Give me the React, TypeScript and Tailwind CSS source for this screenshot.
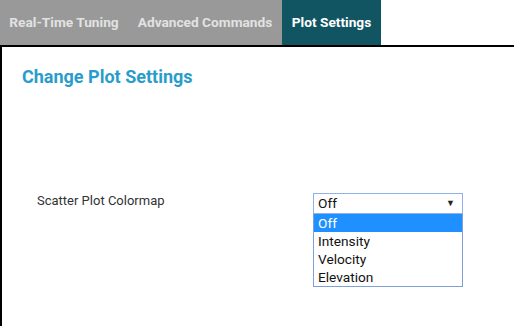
import React from "react";

export default function App() {
  const tabs = [
    { label: "Real-Time Tuning", active: false, w: "w-[128px]" },
    { label: "Advanced Commands", active: false, w: "w-[154px]" },
    { label: "Plot Settings", active: true, w: "w-[99px]" },
  ];
  const options = ["Off", "Intensity", "Velocity", "Elevation"];
  return (
    <div
      className="w-[514px] h-[326px] bg-white overflow-hidden"
      style={{ fontFamily: "Roboto, 'Liberation Sans', sans-serif" }}
    >
      <div className="flex h-[45px]">
        {tabs.map((t) => (
          <div
            key={t.label}
            className={`${t.w} h-full flex items-center justify-center text-[13.7px] font-bold ${
              t.active ? "bg-[#115563] text-white" : "bg-[#999999] text-[#e2e2e2]"
            }`}
          >
            {t.label}
          </div>
        ))}
        <div className="flex-1" />
      </div>
      <div className="border-t-2 border-l-2 border-black h-[281px] pl-[20px] pt-[19px]">
        <div className="text-[#2a9ccc] text-[18px] font-bold leading-[22px]">
          Change Plot Settings
        </div>
        <div className="flex mt-[105px]">
          <div className="w-[291px] pl-[15px] text-[13px] text-[#333] leading-[15px]">
            Scatter Plot Colormap
          </div>
          <div className="relative w-[150px]">
            <div className="h-[21px] border border-[#8fb2ec] flex items-center justify-between pl-[4px] pr-[7px] text-[13.7px] text-[#111]">
              <span>Off</span>
              <span className="text-[9px] text-[#222]">▼</span>
            </div>
            <div className="absolute left-0 top-[21px] w-[150px] border border-t-0 border-[#7f9fd8] bg-white">
              {options.map((o, i) => (
                <div
                  key={o}
                  className={`h-[18px] flex items-center pl-[4px] text-[13.7px] ${
                    i === 0 ? "bg-[#1e90ff] text-white" : "text-[#111]"
                  }`}
                >
                  {o}
                </div>
              ))}
            </div>
          </div>
        </div>
      </div>
    </div>
  );
}
